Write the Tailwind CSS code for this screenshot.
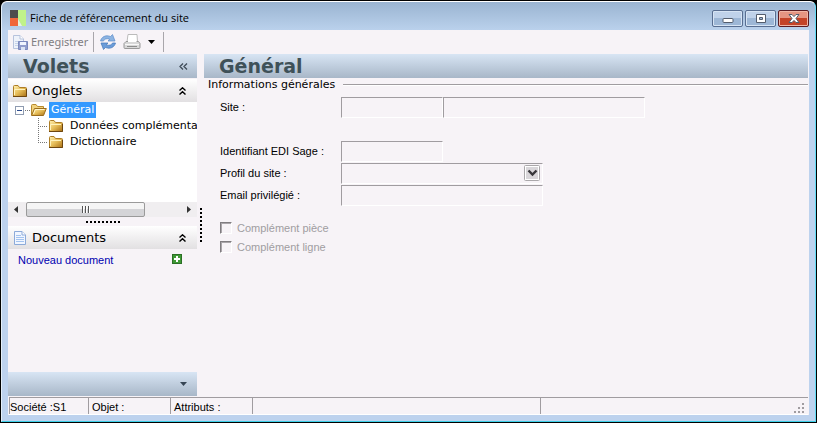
<!DOCTYPE html>
<html lang="fr">
<head>
    <meta charset="UTF-8">
    <meta name="viewport" content="width=device-width, initial-scale=1.0">
    <title>Fiche de référencement du site</title>
    <script src="https://cdn.jsdelivr.net/npm/@tailwindcss/browser@4"></script>
</head>
<body class="bg-black font-['Liberation_Sans',sans-serif] text-[11px] text-black">
    <!-- Folder icons shared by the tree and the panel header -->
    <svg class="absolute w-0 h-0" aria-hidden="true">
        <defs>
            <linearGradient id="gold" x1="0" y1="0" x2="1" y2="1"><stop offset="0" stop-color="#fff0b0"/><stop offset=".5" stop-color="#e6bd58"/><stop offset="1" stop-color="#a96f14"/></linearGradient>
            <symbol id="folder" viewBox="0 0 16 16">
                <path d="M1.500 13.500V3.500Q1.500 2.500 2.500 2.500H6L7.500 4.500H13.500Q14.500 4.500 14.500 5.500V13.500Z" fill="url(#gold)" stroke="#ad7d25"/>
                <path d="M2.500 12V6.500H13" fill="none" stroke="#fff3bd"/>
                <path d="M1 13.500H14.500V6" fill="none" stroke="#6d4610"/>
            </symbol>
            <symbol id="folder-open" viewBox="0 0 17 16">
                <path d="M1.500 13V3.500Q1.500 2.500 2.500 2.500H6L7.500 4.500H13.500V7" fill="#f1d27d" stroke="#b78a2e"/>
                <path d="M1.500 13.500L4.500 6.500H16.300L13.500 13.500Z" fill="url(#gold)" stroke="#9c6d1c"/>
                <path d="M3.500 12L5.300 7.500H14.500" fill="none" stroke="#fff6cc"/>
            </symbol>
        </defs>
    </svg>

    <div class="min-h-screen p-px flex">
        <div class="flex-1 flex flex-col bg-[#bdd2ee] rounded-t-md border border-t-white border-l-[#e4effa] border-r-[#62dcf5] border-b-[#3ccfe8] px-[6px] pb-[6px]">

            <!-- Title bar -->
            <header class="h-7 -mx-[6px] px-[6px] rounded-t-md flex items-center bg-linear-to-b from-[#9ab4d1] to-[#bad1ec]">
                <svg class="mt-1 ml-[2px] w-4 h-4" viewBox="0 0 16 16">
                    <path d="M0 0H8V8H0Z" fill="#4c4c4c"/><path d="M0 8H8V16H0Z" fill="#f0673a"/>
                    <path d="M8 0H16V16H12L8 9Z" fill="#c0f28a"/><path d="M8 9L12 16H8Z" fill="#e8f4df"/>
                </svg>
                <h1 class="mt-1 ml-1 flex-1 font-['Open_Sans',sans-serif] text-[11px]">Fiche de référencement du site</h1>
                <div class="flex gap-[2px] pt-1">
                    <button aria-label="Réduire" class="w-[31px] h-[17px] flex items-center justify-center rounded-[2px] border border-[#586e91] shadow-[inset_0_0_0_1px_#d6e4f4] bg-linear-to-b from-[#bfd2ea] from-50% to-[#9db7d6] to-50%">
                        <svg class="w-3 h-[11px]" viewBox="0 0 12 11"><rect x="1" y="5.500" width="10" height="4" rx="1" fill="#fff" stroke="#535d6d"/></svg>
                    </button>
                    <button aria-label="Agrandir" class="w-[31px] h-[17px] flex items-center justify-center rounded-[2px] border border-[#586e91] shadow-[inset_0_0_0_1px_#d6e4f4] bg-linear-to-b from-[#bfd2ea] from-50% to-[#9db7d6] to-50%">
                        <svg class="w-3 h-[11px]" viewBox="0 0 12 11"><path d="M1.500 1.500H10.500V9.500H1.500Z M4.500 4.500V6.500H7.500V4.500Z" fill="#fff" fill-rule="evenodd" stroke="#535d6d"/></svg>
                    </button>
                    <button aria-label="Fermer" class="w-[31px] h-[17px] flex items-center justify-center rounded-[2px] border border-[#5b1c22] shadow-[inset_0_0_0_1px_#f0b5a5] bg-linear-to-b from-[#e59582] from-50% to-[#c44327] to-50%">
                        <svg class="w-3 h-[11px]" viewBox="0 0 12 11"><path d="M1 1.500H4L6 3.600L8 1.500H11L8 5.500L11 9.500H8L6 7.400L4 9.500H1L4 5.500Z" fill="#fff" stroke="#535d6d"/></svg>
                    </button>
                </div>
            </header>

            <main class="flex-1 flex flex-col bg-[#f7f3f7]">
                <!-- Toolbar -->
                <div class="h-6 flex items-center">
                    <button class="ml-1 flex items-center gap-[3px] text-[#807d82] font-['Noto_Sans',sans-serif]">
                        <svg class="w-4 h-4" viewBox="0 0 16 16">
                            <path d="M1.500 1.500H8L11.500 5V14.500H1.500Z" fill="#eef2fa" stroke="#b7c3dd"/><path d="M8 1.500V5H11.500" fill="#fff" stroke="#b7c3dd"/>
                            <path d="M3 7.500H8M3 9.500H6M3 11.500H6" stroke="#c6d3ea"/>
                            <path d="M6.500 7.500H15.500V15.500H6.500Z" fill="#929dcc" stroke="#7b88bd"/><path d="M8 8H14V11H8Z" fill="#f1f5ff"/><path d="M9 13H13V16H9Z" fill="#dce4f4"/>
                        </svg>
                        <span class="w-[54px] text-left whitespace-nowrap">Enregistrer</span>
                    </button>
                    <div class="ml-2 w-px h-5 bg-[#a9a6ab]"></div>
                    <button aria-label="Actualiser" class="ml-[6px]">
                        <svg class="block w-4 h-4" viewBox="0 0 16 16">
                            <path d="M.5 7C1.500 3 5.500 .5 10.500 2.500L12.500 .5L15 7H8L9.700 5.300C7 4 4 5 3.500 7Z" fill="#8cb4e2" stroke="#5b8dca" stroke-width=".7"/>
                            <path d="M15.500 9C14.500 13 10.500 15.500 5.500 13.500L3.500 15.500L1 9H8L6.300 10.700C9 12 12 11 12.500 9Z" fill="#6b9cd9" stroke="#4377b8" stroke-width=".7"/>
                        </svg>
                    </button>
                    <button aria-label="Imprimer" class="ml-[7px] flex items-center gap-[7px]">
                        <svg class="w-[18px] h-4" viewBox="0 0 18 16">
                            <path d="M4 8L5 .5H14L14.500 8Z" fill="#fff" stroke="#bbb"/>
                            <path d="M1 9.500L3 7.500H15.500L17 9.500V13.500Q17 14.500 16 14.500H2Q1 14.500 1 13.500Z" fill="#d8d8d8" stroke="#999"/>
                            <path d="M5 7.500H13.500" stroke="#fff"/><path d="M2 10.500H16" stroke="#f8f8f8"/><path d="M4 12.500H14" stroke="#8d8d8d"/>
                        </svg>
                        <svg class="w-[7px] h-1" viewBox="0 0 7 4"><path d="M0 0H7L3.500 4Z"/></svg>
                    </button>
                    <div class="ml-2 w-px h-5 bg-[#a9a6ab]"></div>
                </div>

                <div class="flex-1 flex">
                    <!-- Side panel -->
                    <aside class="w-[189px] shrink-0 flex flex-col font-['DejaVu_Sans',sans-serif]">
                        <div class="h-6 pl-[15px] pr-[9px] flex items-center justify-between bg-linear-to-b from-[#d8e5f4] to-[#a8b7c8]">
                            <h2 class="text-[19px] leading-6 font-bold text-[#3f5158]">Volets</h2>
                            <button aria-label="Masquer les volets"><svg class="block w-[9px] h-[7px]" viewBox="0 0 9 7"><path d="M4 .5L1 3.500L4 6.500M8 .5L5 3.500L8 6.500" fill="none" stroke="#3f4b58" stroke-width="1.300"/></svg></button>
                        </div>

                        <div class="mt-px h-[23px] pl-1 pr-[11px] flex items-center bg-linear-to-b from-white to-[#e2e0e2] text-[13px]">
                            <svg class="w-4 h-4"><use href="#folder"/></svg>
                            <h3 class="ml-1 flex-1">Onglets</h3>
                            <button aria-label="Replier Onglets"><svg class="block w-[7px] h-2" viewBox="0 0 7 8"><path d="M.5 3.500L3.500 .8L6.500 3.500M.5 7.500L3.500 4.800L6.500 7.500" fill="none" stroke="#000" stroke-width="1.400"/></svg></button>
                        </div>

                        <div class="h-[100px] bg-white overflow-hidden whitespace-nowrap">
                            <ul>
                                <li>
                                    <div class="h-4 pl-[7px] flex items-center">
                                        <svg class="shrink-0 w-[15px] h-4" viewBox="0 0 15 16"><rect x=".5" y="4.500" width="8" height="8" fill="#fff" stroke="#8e9bb0"/><path d="M2 8.500H7" stroke="#2b4b8d"/><path d="M10 8.500H15" stroke="#777" stroke-dasharray="1 1"/></svg>
                                        <svg class="shrink-0 w-[17px] h-4"><use href="#folder-open"/></svg>
                                        <a href="#" class="ml-[2px] px-[2px] h-4 leading-4 bg-[#3399ff] text-white">Général</a>
                                    </div>
                                    <ul>
                                        <li class="h-4 pl-[30px] flex items-center">
                                            <svg class="shrink-0 w-[10px] h-4" viewBox="0 0 10 16"><path d="M.5 0V16M0 8.500H10" stroke="#777" stroke-dasharray="1 1"/></svg>
                                            <svg class="shrink-0 w-4 h-4"><use href="#folder"/></svg>
                                            <a href="#" class="shrink-0 ml-[6px]">Données complémentaires</a>
                                        </li>
                                        <li class="h-4 pl-[30px] flex items-center">
                                            <svg class="shrink-0 w-[10px] h-4" viewBox="0 0 10 16"><path d="M.5 0V8.500M0 8.500H10" stroke="#777" stroke-dasharray="1 1"/></svg>
                                            <svg class="shrink-0 w-4 h-4"><use href="#folder"/></svg>
                                            <a href="#" class="shrink-0 ml-[6px]">Dictionnaire</a>
                                        </li>
                                    </ul>
                                </li>
                            </ul>
                        </div>

                        <!-- Horizontal scroll bar -->
                        <div class="h-[15px] px-[6px] flex items-center bg-[#f0eef0]">
                            <svg class="w-1 h-[7px]" viewBox="0 0 4 7"><path d="M4 0V7L0 3.500Z" fill="#333"/></svg>
                            <div class="ml-2 w-[119px] h-[15px] flex items-center justify-center rounded-[2px] border border-[#9a9a9a] bg-linear-to-b from-[#f5f5f5] from-50% to-[#d4d4d7] to-50%">
                                <svg class="w-2 h-[7px]" viewBox="0 0 8 7"><path d="M.5 0V7M3.500 0V7M6.500 0V7" stroke="#555"/><path d="M1.500 0V7M4.500 0V7M7.500 0V7" stroke="#fff"/></svg>
                            </div>
                            <svg class="ml-auto w-1 h-[7px]" viewBox="0 0 4 7"><path d="M0 0V7L4 3.500Z" fill="#333"/></svg>
                        </div>
                        <div class="h-[9px] flex items-center justify-center">
                            <svg class="w-[34px] h-[2px]" viewBox="0 0 34 2"><path d="M0 1H34" stroke="#000" stroke-width="2" stroke-dasharray="2 2"/></svg>
                        </div>

                        <div class="h-[23px] pl-1 pr-[11px] flex items-center bg-linear-to-b from-white to-[#e2e0e2] text-[13px]">
                            <svg class="w-4 h-4" viewBox="0 0 16 16"><path d="M2.500 1.500H10L13.500 5V14.500H2.500Z" fill="#f1f6ff" stroke="#8caad9"/><path d="M10 1.500V5H13.500" fill="#fff" stroke="#8caad9"/><path d="M4 5.500H9M4 7.500H12M4 9.500H12M4 11.500H12" stroke="#a3c3ef"/></svg>
                            <h3 class="ml-1 flex-1">Documents</h3>
                            <button aria-label="Replier Documents"><svg class="block w-[7px] h-2" viewBox="0 0 7 8"><path d="M.5 3.500L3.500 .8L6.500 3.500M.5 7.500L3.500 4.800L6.500 7.500" fill="none" stroke="#000" stroke-width="1.400"/></svg></button>
                        </div>
                        <div class="flex-1 pt-[3px] pl-[10px] pr-[15px] flex items-start justify-between font-['Liberation_Sans',sans-serif]">
                            <a href="#" class="leading-4 text-[#0000b0]">Nouveau document</a>
                            <button aria-label="Ajouter un document" class="pt-[2px]"><svg class="block w-[10px] h-[10px]" viewBox="0 0 10 10"><rect x=".5" y=".5" width="9" height="9" fill="#3f9935" stroke="#2b6f25"/><path d="M2 5H8M5 2V8" stroke="#fff" stroke-width="2"/></svg></button>
                        </div>

                        <div class="h-6 pr-[10px] flex items-center justify-end bg-linear-to-b from-[#d8e5f4] to-[#a8b7c8]">
                            <button aria-label="Autres volets"><svg class="block w-[7px] h-1" viewBox="0 0 7 4"><path d="M0 0H7L3.500 4Z" fill="#364554"/></svg></button>
                        </div>
                    </aside>

                    <!-- Splitter grip -->
                    <div class="w-[7px] pt-[154px] flex justify-center">
                        <svg class="w-[2px] h-[34px]" viewBox="0 0 2 34"><path d="M1 0V34" stroke="#000" stroke-width="2" stroke-dasharray="2 2"/></svg>
                    </div>

                    <!-- Form -->
                    <section class="flex-1 mr-px">
                        <h2 class="h-6 pl-[15px] font-['DejaVu_Sans',sans-serif] text-[19px] leading-6 font-bold text-[#3f5158] bg-linear-to-b from-[#d8e5f4] to-[#a8b7c8]">Général</h2>
                        <form>
                            <div class="h-[14px] pl-1 flex items-center gap-2">
                                <h3 class="font-['DejaVu_Sans',sans-serif]">Informations générales</h3>
                                <div class="flex-1 h-[2px] bg-white border-t border-[#a09ca0]"></div>
                            </div>
                            <div class="pl-4 pt-[5px] grid grid-cols-[121px_202px_auto] gap-y-px justify-start items-center">
                                <label for="site">Site :</label>
                                <div class="col-span-2 flex">
                                    <input id="site" disabled class="w-[102px] h-[21px] px-1 border border-t-[#a09ca0] border-l-[#a09ca0] border-r-white border-b-white">
                                    <input id="site-nom" aria-label="Nom du site" disabled class="w-[202px] h-[21px] px-1 border border-t-[#a09ca0] border-l-[#a09ca0] border-r-white border-b-white">
                                </div>
                                <label for="edi" class="mt-[22px]">Identifiant EDI Sage :</label>
                                <input id="edi" disabled class="mt-[22px] w-[102px] h-[21px] px-1 border border-t-[#a09ca0] border-l-[#a09ca0] border-r-white border-b-white">
                                <label for="profil" class="col-start-1">Profil du site :</label>
                                <div class="relative">
                                    <select id="profil" disabled class="block appearance-none w-full h-[21px] px-1 border border-t-[#a09ca0] border-l-[#a09ca0] border-r-white border-b-white"></select>
                                    <svg class="absolute right-[3px] top-[2px] w-4 h-4 pointer-events-none" viewBox="0 0 16 16">
                                        <rect x=".5" y=".5" width="15" height="15" rx="1" fill="#fff" stroke="#aaa7aa"/><rect x="2" y="2" width="12" height="12" fill="#d9d6da"/>
                                        <path d="M4.500 5.500L8.500 9.500L12.500 5.500" fill="none" stroke="#38363a" stroke-width="2.400"/>
                                    </svg>
                                </div>
                                <label for="email" class="col-start-1">Email privilégié :</label>
                                <input id="email" disabled class="w-full h-[21px] px-1 border border-t-[#a09ca0] border-l-[#a09ca0] border-r-white border-b-white">
                            </div>
                            <div class="pl-4 pt-[14px] flex flex-col items-start gap-[3px] text-[#a09da1]">
                                <label class="h-4 flex items-center gap-[5px]"><input type="checkbox" disabled class="appearance-none w-3 h-3 border border-t-[#807c80] border-l-[#807c80] border-r-white border-b-white shadow-[inset_1px_1px_0_#aaa6aa]">Complément pièce</label>
                                <label class="h-4 flex items-center gap-[5px]"><input type="checkbox" disabled class="appearance-none w-3 h-3 border border-t-[#807c80] border-l-[#807c80] border-r-white border-b-white shadow-[inset_1px_1px_0_#aaa6aa]">Complément ligne</label>
                            </div>
                        </form>
                    </section>
                </div>

                <!-- Status bar -->
                <footer class="mt-px ml-px mr-px h-[18px] flex border-t border-t-[#a09ca0] border-b border-b-white leading-[18px]">
                    <div class="w-[79px] border-l border-[#a09ca0] whitespace-nowrap">Société :S1</div>
                    <div class="w-[82px] pl-[3px] border-l border-[#a09ca0]">Objet :</div>
                    <div class="w-[82px] pl-[3px] border-l border-[#a09ca0]">Attributs :</div>
                    <div class="w-[288px] border-l border-[#a09ca0]"></div>
                    <div class="flex-1 pr-1 pb-px flex items-end justify-end border-l border-[#a09ca0]">
                        <svg class="w-[10px] h-[10px]" viewBox="0 0 10 10"><path d="M8 0h2v2h-2zM4 4h2v2h-2zM8 4h2v2h-2zM0 8h2v2h-2zM4 8h2v2h-2zM8 8h2v2h-2z" fill="#a09ca0"/></svg>
                    </div>
                </footer>
            </main>
        </div>
    </div>
</body>
</html>
